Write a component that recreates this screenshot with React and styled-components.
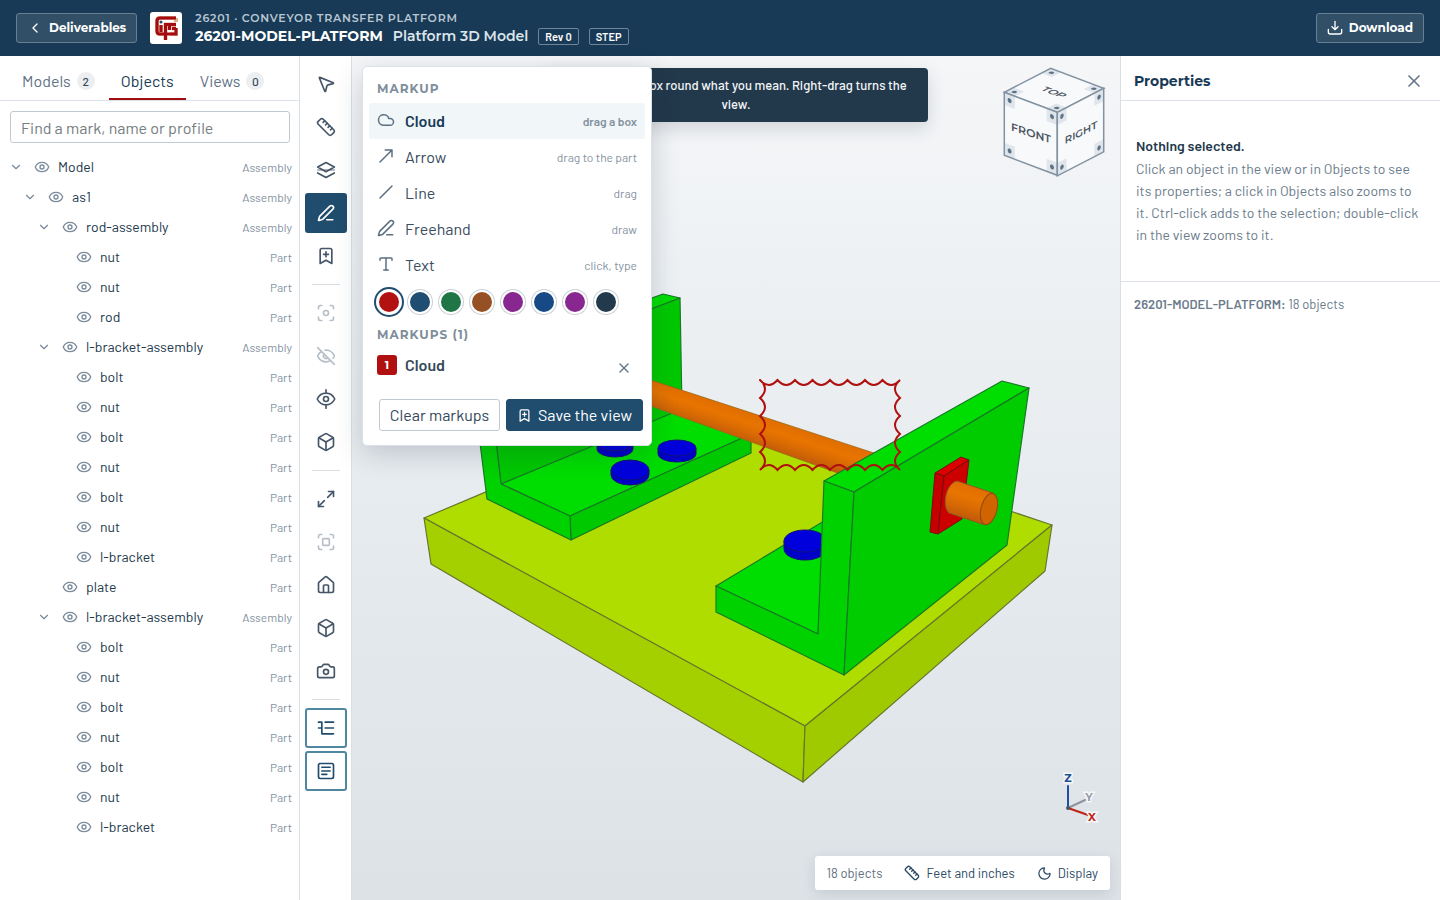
import React, { useState } from "react";
import styled, { createGlobalStyle, css } from "styled-components";
import {
  BookmarkPlus, Box, Camera, ChevronDown, ChevronLeft, Cloud, Eye, EyeOff,
  Focus, House, Maximize2, Moon, MousePointer2, PenLine, Ruler, Type, X,
} from "lucide-react";

const body = `"Barlow", Roboto, "Liberation Sans", sans-serif`;
const display = `"Montserrat", Inter, "Liberation Sans", sans-serif`;

const GlobalStyle = createGlobalStyle`
  *, *::before, *::after { box-sizing: border-box; }
  html, body, #root { height: 100%; margin: 0; }
  body { font: 400 14px/20px ${body}; color: #22384b; background: #fff; }
  button, input { font: inherit; color: inherit; }
  button { cursor: pointer; background: none; border: 0; padding: 0; }
  h1, h2, h3, p, ul { margin: 0; padding: 0; }
  ul { list-style: none; }
`;

const Page = styled.div`
  display: flex;
  flex-direction: column;
  min-height: 100%;
  height: 100vh;
`;

/* Header */
const Header = styled.header`
  flex: none;
  display: flex;
  align-items: center;
  height: 56px;
  padding: 0 16px;
  background: #183a56;
  color: #fff;
`;
const HeaderButton = styled.button`
  display: flex;
  align-items: center;
  gap: 6px;
  height: 30px;
  padding: 0 10px;
  border: 1px solid #667f93;
  border-radius: 3px;
  background: #314f67;
  font: 700 12px/20px ${display};
`;
const Logo = styled.svg`
  flex: none;
  width: 32px;
  height: 32px;
  margin: 0 13px;
`;
const TitleBlock = styled.div`
  flex: 1;
  min-width: 0;
  padding-top: 1px;
`;
const Project = styled.p`
  font: 600 11px/15px ${display};
  letter-spacing: 0.07em;
  color: #b9c6d3;
`;
const TitleRow = styled.div`
  display: flex;
  align-items: center;
  gap: 10px;
  height: 20px;
`;
const Title = styled.h1`
  font: 700 14px/20px ${display};
`;
const Subtitle = styled.span`
  font: 600 14px/20px ${display};
  color: #dde5ec;
`;
const Tag = styled.span`
  padding: 0 6px;
  border: 1px solid #6e8598;
  border-radius: 2px;
  font-size: 11px;
  line-height: 15px;
  font-weight: 600;
`;

const Workspace = styled.div`
  flex: 1;
  min-height: 0;
  display: flex;
`;

/* Object browser */
const Browser = styled.aside`
  flex: none;
  width: 300px;
  border-right: 1px solid #d8dfe5;
  overflow: hidden;
`;
const Tabs = styled.div`
  display: flex;
  gap: 2px;
  height: 45px;
  padding: 8px 10px 0;
  border-bottom: 1px solid #dce2e8;
`;
const Tab = styled.button`
  display: flex;
  align-items: center;
  gap: 6px;
  height: 36px;
  padding: 0 12px;
  font-size: 16px;
  color: ${(p) => (p.$on ? "#183a56" : "#5f7285")};
  border-bottom: 2px solid ${(p) => (p.$on ? "#a30b12" : "transparent")};
`;
const Count = styled.span`
  width: 18px;
  height: 18px;
  border-radius: 9px;
  background: #eceef0;
  color: #34485a;
  font-size: 12px;
  line-height: 18px;
  font-weight: 500;
  text-align: center;
`;
const Search = styled.input`
  display: block;
  width: 280px;
  height: 32px;
  margin: 10px 9px 9px 10px;
  padding: 0 10px;
  border: 1px solid #c0c9d1;
  border-radius: 3px;
  font-size: 16px;
  &::placeholder { color: #757d80; opacity: 1; }
`;
const TreeRow = styled.li`
  display: flex;
  align-items: center;
  height: 30px;
  padding: 0 7px 0 ${(p) => 9 + p.$depth * 14}px;
`;
const Toggle = styled.button`
  display: flex;
  width: 14px;
  height: 14px;
  margin-right: 11px;
  color: #78899a;
`;
const EyeButton = styled.button`
  display: flex;
  margin-right: 8px;
  color: #7b8b9b;
`;
const NodeName = styled.span`
  flex: 1;
  font-size: 14px;
`;
const NodeKind = styled.span`
  font-size: 12px;
  color: #84929f;
`;

/* Tool strip */
const ToolStrip = styled.nav`
  flex: none;
  display: flex;
  flex-direction: column;
  gap: 3px;
  width: 52px;
  padding: 8px 4px 8px 5px;
  border-right: 1px solid #d8dfe5;
`;
const Tool = styled.button`
  display: grid;
  place-items: center;
  width: 42px;
  height: 40px;
  border: 2px solid transparent;
  border-radius: 3px;
  color: #465669;
  ${(p) => p.$active && css`border-color: #204c6e; background: #204c6e; color: #fff;`}
  ${(p) => p.$pressed && css`border-color: #4f86a0; color: #204c6e;`}
  &:disabled { color: #b7c0c9; cursor: default; }
`;
const Divider = styled.hr`
  width: 28px;
  height: 1px;
  margin: 5px auto;
  border: 0;
  background: #d8dde2;
`;

/* Viewport and what floats over it */
const Viewport = styled.main`
  position: relative;
  flex: 1;
  min-width: 0;
  background: linear-gradient(#f5f6f8, #ebeff2 35%, #dde2e7);
`;
const Scene = styled.svg`
  position: absolute;
  inset: 0;
  width: 100%;
  height: 100%;
`;
const ViewCube = styled.svg`
  position: absolute;
  top: 10px;
  right: 14px;
  width: 104px;
  height: 112px;
`;
const Axes = styled.svg`
  position: absolute;
  right: 16px;
  bottom: 72px;
  width: 52px;
  height: 60px;
`;
const Hint = styled.p`
  position: absolute;
  top: 12px;
  left: 50%;
  width: 384px;
  margin-left: -192px;
  padding: 8px 14px;
  border-radius: 4px;
  background: #22384b;
  color: #f3f6f8;
  font-size: 13px;
  line-height: 19px;
  font-weight: 500;
  text-align: center;
  box-shadow: 0 6px 18px rgba(24, 42, 60, 0.16);
`;
const Menu = styled.section`
  position: absolute;
  top: 10px;
  left: 10px;
  width: 290px;
  padding: 12px 6px 14px;
  border: 1px solid #dbe1e6;
  border-radius: 5px;
  background: #fff;
  box-shadow: 0 8px 28px rgba(24, 42, 60, 0.2);
`;
const MenuHeading = styled.h2`
  padding: 0 8px 4px;
  font: 700 12px/20px ${display};
  letter-spacing: 1px;
  color: #7f8e9c;
`;
const MenuItem = styled.button`
  display: flex;
  align-items: center;
  gap: 10px;
  width: 100%;
  height: 36px;
  padding: 0 8px;
  border-radius: 3px;
  text-align: left;
  font-size: 16px;
  color: #3a4c5e;
  svg { margin-bottom: 2px; color: #5d7082; }
  ${(p) => p.$active && css`background: #f1f6f9; color: #183a56; font-weight: 600;`}
`;
const MenuLabel = styled.span`
  flex: 1;
`;
const MenuHint = styled.span`
  font-size: 12px;
  color: #84929f;
`;
const Swatches = styled.div`
  display: flex;
  gap: 5px;
  padding: 6px 7px 10px;
`;
const Swatch = styled.button`
  width: 26px;
  height: 26px;
  border: 3px solid #fff;
  border-radius: 50%;
  background: ${(p) => p.$color};
  box-shadow: 0 0 0 2px #204c6e;
  ${(p) => !p.$on && css`width: 24px; height: 24px; border-width: 2px; margin: 1px; box-shadow: 0 0 0 1px #c9d1d8;`}
`;
const MarkupRow = styled.div`
  display: flex;
  align-items: flex-start;
  gap: 8px;
  height: 32px;
  padding: 6px 8px 0;
  font-size: 16px;
  font-weight: 600;
  color: #34485a;
`;
const MarkupNumber = styled.span`
  width: 20px;
  height: 20px;
  border-radius: 3px;
  background: #b01010;
  color: #fff;
  font: 700 11px/20px ${display};
  text-align: center;
`;
const IconButton = styled.button`
  display: grid;
  place-items: center;
  width: 26px;
  height: 26px;
  color: #66788a;
`;
const MenuActions = styled.div`
  display: flex;
  gap: 6px;
  padding: 18px 2px 0 10px;
`;
const Action = styled.button`
  flex: ${(p) => (p.$primary ? 137 : 121)} 1 0;
  display: flex;
  align-items: center;
  justify-content: center;
  gap: 6px;
  height: 32px;
  border: 1px solid ${(p) => (p.$primary ? "#204c6e" : "#c0c9d1")};
  border-radius: 3px;
  background: ${(p) => (p.$primary ? "#204c6e" : "#fff")};
  color: ${(p) => (p.$primary ? "#fff" : "#34485a")};
  font-size: 16px;
  white-space: nowrap;
`;
const StatusBar = styled.div`
  position: absolute;
  right: 10px;
  bottom: 10px;
  display: flex;
  align-items: center;
  gap: 22px;
  height: 34px;
  padding: 0 12px;
  border-radius: 3px;
  background: #fff;
  color: #5f7080;
  font-size: 13px;
  box-shadow: 0 4px 14px rgba(24, 42, 60, 0.12);
`;
const StatusButton = styled.button`
  display: flex;
  align-items: center;
  gap: 6px;
  color: #2b4a66;
`;

/* Properties */
const Properties = styled.aside`
  flex: none;
  width: 320px;
  border-left: 1px solid #d8dfe5;
`;
const PanelHeader = styled.header`
  display: flex;
  align-items: center;
  justify-content: space-between;
  height: 45px;
  padding: 6px 13px 0;
  border-bottom: 1px solid #dce2e8;
`;
const PanelTitle = styled.h2`
  font: 700 14px/20px ${display};
  color: #183a56;
`;
const Empty = styled.div`
  height: 181px;
  padding: 33px 15px;
  border-bottom: 1px solid #dce2e8;
  color: #6c7c8b;
  line-height: 22px;
`;
const EmptyTitle = styled.h3`
  font-size: 14px;
  line-height: 24px;
  font-weight: 600;
  color: #22384b;
`;
const ModelLine = styled.p`
  padding: 12px 13px;
  font-size: 13px;
  color: #6c7c8b;
  b { font-weight: 600; }
`;

const LineIcon = ({ d, size = 20, width = 2, children }) => (
  <svg width={size} height={size} viewBox="0 0 24 24" fill="none" stroke="currentColor" strokeWidth={width} strokeLinecap="round" strokeLinejoin="round" aria-hidden="true">
    {d && <path d={d} />}
    {children}
  </svg>
);
const LayersIcon = () => (
  <LineIcon d="M12 3 22 8.5 12 14 2 8.5zM2 15.5l10 5.5 10-5.5"><path d="M2 12h20" strokeWidth="1" /></LineIcon>
);
const IsolateIcon = () => (
  <LineIcon d="M12 1v4M12 19v4M1.5 12C4 7 8 5 12 5s8 2 10.500 7c-2.500 5-6.500 7-10.500 7S4 17 1.500 12z"><circle cx="12" cy="12" r="3" /></LineIcon>
);
const FitIcon = () => (
  <LineIcon d="M3 7V5a2 2 0 0 1 2-2h2M17 3h2a2 2 0 0 1 2 2v2M21 17v2a2 2 0 0 1-2 2h-2M7 21H5a2 2 0 0 1-2-2v-2"><rect x="8" y="8" width="8" height="8" rx="1" /></LineIcon>
);
const TreeIcon = () => <LineIcon d="M3 5h4v14h14M3 12h4M11 5h10M11 12h10" />;
const NoteIcon = () => (
  <LineIcon d="M7 7.500h10M7 12h10M7 16h6"><rect x="3" y="3" width="18" height="18" rx="2" /></LineIcon>
);
const DownloadIcon = () => <LineIcon size={16} d="M12 2v12M7.500 10l4.500 4.500L16.500 10M2 14v4a3 3 0 0 0 3 3h14a3 3 0 0 0 3-3v-4" />;
const ArrowIcon = () => <LineIcon size={18} d="M4 20 20 4M11 4h9v9" />;
const SlashIcon = () => <LineIcon size={18} d="M4 20 20 4" />;
const CloudIcon = () => <Cloud size={18} />;
const FreehandIcon = () => <PenLine size={18} />;
const TextIcon = () => <Type size={18} />;

const A = "Assembly";
const tree = [
  [0, "Model", A], [1, "as1", A], [2, "rod-assembly", A], [3, "nut"], [3, "nut"], [3, "rod"],
  [2, "l-bracket-assembly", A], [3, "bolt"], [3, "nut"], [3, "bolt"], [3, "nut"], [3, "bolt"], [3, "nut"], [3, "l-bracket"],
  [2, "plate", "Part"],
  [2, "l-bracket-assembly", A], [3, "bolt"], [3, "nut"], [3, "bolt"], [3, "nut"], [3, "bolt"], [3, "nut"], [3, "l-bracket"],
];

const tools = [
  ["Select", <MousePointer2 size={20} />],
  ["Measure", <Ruler size={20} />],
  ["Section", <LayersIcon />],
  ["Markup", <PenLine size={18} strokeWidth={2.2} />, "active"],
  ["Save view", <BookmarkPlus size={20} />],
  null,
  ["Zoom to selection", <Focus size={20} />, "disabled"],
  ["Hide", <EyeOff size={20} />, "disabled"],
  ["Isolate", <IsolateIcon />],
  ["Show all", <Box size={20} />],
  null,
  ["Fit", <Maximize2 size={20} />],
  ["Fit selection", <FitIcon />, "disabled"],
  ["Home", <House size={20} />],
  ["Projection", <Box size={20} />],
  ["Snapshot", <Camera size={20} />],
  null,
  ["Tree", <TreeIcon />, "pressed"],
  ["Properties", <NoteIcon />, "pressed"],
];

const markupTools = [
  ["Cloud", "drag a box", CloudIcon],
  ["Arrow", "drag to the part", ArrowIcon],
  ["Line", "drag", SlashIcon],
  ["Freehand", "draw", FreehandIcon],
  ["Text", "click, type", TextIcon],
];
const swatches = ["#b31212", "#204e72", "#1f7545", "#955123", "#87278f", "#174a84", "#87278f", "#23394c"];

const Bolt = ({ x, y, rx, ry, h }) => (
  <g fill="#0000c8" stroke="#12127a" strokeWidth="1">
    <path d={`M${x - rx} ${y}v${h}a${rx} ${ry} 0 0 0 ${2 * rx} 0v${-h}`} />
    <ellipse cx={x} cy={y} rx={rx} ry={ry} fill="#0000dc" />
  </g>
);

const scallops = `M760 380${" q8.75 10 17.5 0".repeat(8)}${" q-10 9 0 18".repeat(5)}${" q-8.75 -10 -17.5 0".repeat(8)}${" q10 -9 0 -18".repeat(5)}`;

function ModelScene() {
  return (
    <Scene viewBox="352 56 768 844" role="img" aria-label="3D model of the platform">
      <defs>
        <linearGradient id="rod" gradientUnits="userSpaceOnUse" x1="760" y1="415" x2="750" y2="445">
          <stop offset="0" stopColor="#df6d00" /><stop offset=".35" stopColor="#e87500" /><stop offset=".65" stopColor="#d86a04" /><stop offset="1" stopColor="#bd580b" />
        </linearGradient>
        <linearGradient id="stub" gradientUnits="userSpaceOnUse" x1="976" y1="486" x2="966" y2="520">
          <stop offset="0" stopColor="#df6d00" /><stop offset=".35" stopColor="#e87500" /><stop offset=".65" stopColor="#d86a04" /><stop offset="1" stopColor="#bd580b" />
        </linearGradient>
      </defs>
      <g stroke="#68762e" strokeWidth="1.2" strokeLinejoin="round">
        <path fill="#b0dd00" d="M424 518 692 405 1052 525 805 726z" />
        <path fill="#a5d000" d="M424 518 805 726 803 782 431 564z" />
        <path fill="#a0ca00" d="M805 726 1052 525 1045 571 803 782z" />
      </g>
      <g stroke="#187a26" strokeWidth="1.2" strokeLinejoin="round">
        <path fill="#00dd00" d="M470 363 663 294 680 298 488 372z" />
        <path fill="#00c800" d="M488 372 680 298 682 410 501 484z" />
        <path fill="#00dd00" d="M501 484 682 409 751 434 570 516z" />
        <path fill="#00c900" d="M570 516 751 434V453L571 540z" />
        <path fill="#00d200" d="M470 363 488 372 501 484 570 516 571 540 487 499z" />
      </g>
      <Bolt x={615} y={443} rx={18} ry={8} h={6} />
      <Bolt x={677} y={448} rx={19} ry={8} h={6} />
      <Bolt x={630} y={470} rx={19} ry={10} h={5} />
      <path fill="url(#rod)" stroke="#9a6a18" strokeWidth=".8" d="M620 370 880 455 860 481 620 395z" />
      <path fill="#00dd00" stroke="#187a26" strokeWidth="1.2" d="M716 586 824 521 818 634z" />
      <Bolt x={805} y={541} rx={21} ry={11} h={8} />
      <g stroke="#187a26" strokeWidth="1.2" strokeLinejoin="round">
        <path fill="#00dd00" d="M824 481 1002 381 1029 388 854 492z" />
        <path fill="#00d200" d="M824 481 854 492 844 675 716 612V586L818 634z" />
        <path fill="#00cc00" d="M854 492 1029 388 1007 545 844 675z" />
      </g>
      <g stroke="#7a0c0c" strokeWidth="1" strokeLinejoin="round">
        <path fill="#dc0000" d="M935 473 961 457 969 460 944 476z" />
        <path fill="#c60000" d="M935 473 944 476 938 534 930 532z" />
        <path fill="#cc0000" d="M944 476 969 460 962 519 938 534z" />
      </g>
      <path fill="url(#stub)" stroke="#8f5a20" strokeWidth="1" d="M957 481 993 493 985 525 949 513C942 507 945 484 957 481z" />
      <ellipse cx="989" cy="509" rx="8" ry="16" transform="rotate(14 989 509)" fill="#d06400" stroke="#8f4a10" strokeWidth="1" />
      <path fill="none" stroke="#b01010" strokeWidth="2" strokeLinecap="round" d={scallops} />
    </Scene>
  );
}

const faces = [
  "matrix(53 20 46.400 -24 1004.300 92.300)",
  "matrix(53 20 0 63 1004.300 92.300)",
  "matrix(46.400 -24 0 63.500 1057.300 112.300)",
];
function Cube() {
  return (
    <ViewCube viewBox="1002 66 104 112" role="img" aria-label="View cube">
      {faces.map((m) => (
        <g key={m} transform={m}>
          <rect width="1" height="1" fill="#f8f9fb" />
          {[[0, 0], [0.8, 0], [0, 0.8], [0.8, 0.8]].map(([x, y]) => (
            <g key={`${x}${y}`}>
              <rect x={x} y={y} width=".2" height=".2" fill="#dfe5eb" />
              <circle cx={x + 0.1} cy={y + 0.1} r=".038" fill="#5d7387" />
            </g>
          ))}
          <rect width="1" height="1" fill="none" stroke="#8292a0" strokeWidth="1.500" vectorEffect="non-scaling-stroke" />
        </g>
      ))}
      <g fontFamily="Montserrat, Inter, sans-serif" fontWeight="600" fontSize="12" fill="#4a545e" textAnchor="middle">
        <text transform="matrix(.85 .32 -.75 .39 1051 94)">TOP</text>
        <text transform="translate(1031 137) skewY(18)" fontSize="11">FRONT</text>
        <text transform="translate(1081 136) skewY(-27)" fontSize="10">RIGHT</text>
      </g>
    </ViewCube>
  );
}

export default function App() {
  const [tab, setTab] = useState("Objects");
  const [markup, setMarkup] = useState("Cloud");
  const [color, setColor] = useState(0);
  return (
    <Page>
      <GlobalStyle />
      <Header>
        <HeaderButton><ChevronLeft size={16} />Deliverables</HeaderButton>
        <Logo viewBox="0 0 32 32" role="img" aria-label="Company logo">
          <rect width="32" height="32" rx="3" fill="#fff" />
          <g fill="none" strokeLinejoin="miter">
            <path d="M26 6H10Q7 6 7 9v10q0 3 3 3h5.500M26 6v4M11 13v7M15.500 28V12.500h4V18M20 12.500h6M26 16v6h-6M22 16.500h4" stroke="#dfb48b" strokeWidth="4" />
            <path d="M26 6H10Q7 6 7 9v10q0 3 3 3h5.500M11 13v7M15.500 28V12.500h4V18M20 12.500h6M26 16v6h-9M22 16.500h4" stroke="#a50b12" strokeWidth="3" />
          </g>
          <circle cx="11" cy="10" r="1.500" fill="#204c6e" />
        </Logo>
        <TitleBlock>
          <Project>26201 · CONVEYOR TRANSFER PLATFORM</Project>
          <TitleRow>
            <Title>26201-MODEL-PLATFORM</Title>
            <Subtitle>Platform 3D Model</Subtitle>
            <Tag>Rev 0</Tag>
            <Tag>STEP</Tag>
          </TitleRow>
        </TitleBlock>
        <HeaderButton><DownloadIcon />Download</HeaderButton>
      </Header>
      <Workspace>
        <Browser>
          <Tabs role="tablist">
            {[["Models", 2], ["Objects"], ["Views", 0]].map(([name, n]) => (
              <Tab key={name} role="tab" aria-selected={tab === name} $on={tab === name} onClick={() => setTab(name)}>
                {name}{n !== undefined && <Count>{n}</Count>}
              </Tab>
            ))}
          </Tabs>
          <Search type="search" aria-label="Find a mark, name or profile" placeholder="Find a mark, name or profile" />
          <ul>
            {tree.map(([depth, name, kind = "Part"], i) => (
              <TreeRow key={i} $depth={depth}>
                <Toggle as={kind === A ? "button" : "span"} aria-label={kind === A ? `Collapse ${name}` : undefined}>
                  {kind === A && <ChevronDown size={14} />}
                </Toggle>
                <EyeButton aria-label={`Hide ${name}`}><Eye size={16} /></EyeButton>
                <NodeName>{name}</NodeName>
                <NodeKind>{kind}</NodeKind>
              </TreeRow>
            ))}
          </ul>
        </Browser>
        <ToolStrip aria-label="Tools">
          {tools.map((t, i) =>
            t ? (
              <Tool key={i} aria-label={t[0]} disabled={t[2] === "disabled"} $active={t[2] === "active"} $pressed={t[2] === "pressed"}>{t[1]}</Tool>
            ) : (
              <Divider key={i} />
            )
          )}
        </ToolStrip>
        <Viewport>
          <ModelScene />
          <Cube />
          <Axes viewBox="1052 768 52 60" role="img" aria-label="Axes">
            <g strokeWidth="2" strokeLinecap="round">
              <path d="M1068 808 1085 800" stroke="#8a95a1" />
              <path d="M1068 808 1088 815" stroke="#c02214" />
              <path d="M1068 808V786" stroke="#1f4fa3" />
            </g>
            <circle cx="1068" cy="808" r="2" fill="#465669" />
            <g fontFamily="Montserrat, Inter, sans-serif" fontSize="11" fontWeight="700" textAnchor="middle" stroke="#f5f7f9" strokeWidth="3" paintOrder="stroke">
              <text x="1068" y="782" fill="#1f4f93">Z</text>
              <text x="1089" y="801" fill="#929ca6">Y</text>
              <text x="1092" y="821" fill="#c02214">X</text>
            </g>
          </Axes>
          <Hint>Cloud: drag a box round what you mean. Right-drag turns the view.</Hint>
          <Menu aria-label="Markup">
            <MenuHeading>MARKUP</MenuHeading>
            {markupTools.map(([name, hint, Icon]) => (
              <MenuItem key={name} $active={markup === name} onClick={() => setMarkup(name)}>
                <Icon />
                <MenuLabel>{name}</MenuLabel>
                <MenuHint>{hint}</MenuHint>
              </MenuItem>
            ))}
            <Swatches>
              {swatches.map((c, i) => (
                <Swatch key={i} aria-label={`Colour ${i + 1}`} $color={c} $on={color === i} onClick={() => setColor(i)} />
              ))}
            </Swatches>
            <MenuHeading>MARKUPS (1)</MenuHeading>
            <MarkupRow>
              <MarkupNumber>1</MarkupNumber>
              <MenuLabel>Cloud</MenuLabel>
              <IconButton aria-label="Delete markup"><X size={16} /></IconButton>
            </MarkupRow>
            <MenuActions>
              <Action>Clear markups</Action>
              <Action $primary><BookmarkPlus size={15} />Save the view</Action>
            </MenuActions>
          </Menu>
          <StatusBar>
            <span>18 objects</span>
            <StatusButton><Ruler size={16} />Feet and inches</StatusButton>
            <StatusButton><Moon size={15} />Display</StatusButton>
          </StatusBar>
        </Viewport>
        <Properties>
          <PanelHeader>
            <PanelTitle>Properties</PanelTitle>
            <IconButton aria-label="Close properties"><X size={20} /></IconButton>
          </PanelHeader>
          <Empty>
            <EmptyTitle>Nothing selected.</EmptyTitle>
            <p>Click an object in the view or in Objects to see its properties; a click in Objects also zooms to it. Ctrl-click adds to the selection; double-click in the view zooms to it.</p>
          </Empty>
          <ModelLine><b>26201-MODEL-PLATFORM:</b> 18 objects</ModelLine>
        </Properties>
      </Workspace>
    </Page>
  );
}
